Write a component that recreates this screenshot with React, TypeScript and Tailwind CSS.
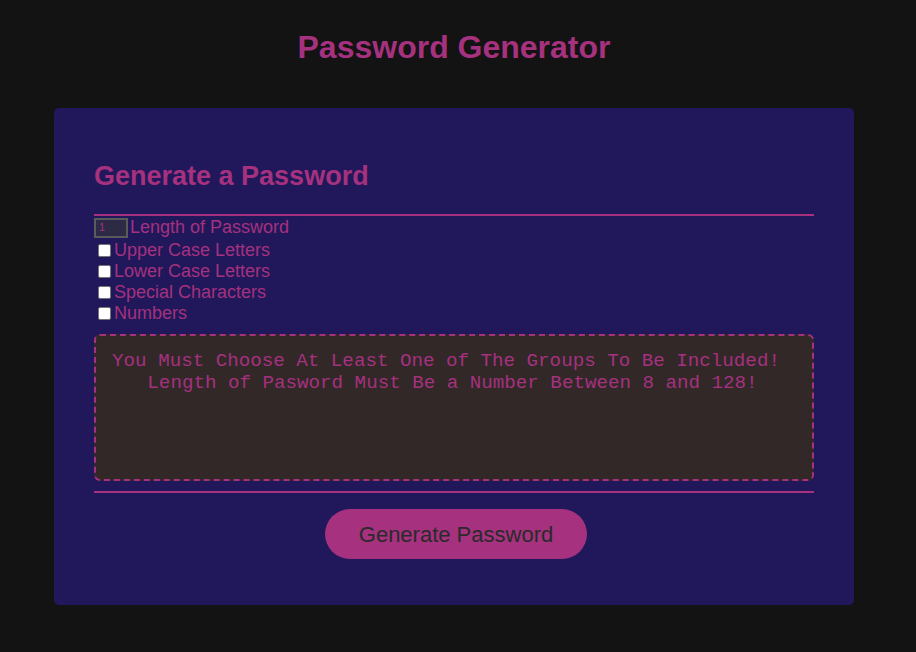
export default function App() {
  return (
    <div className="min-h-[652px] bg-[#131313] font-['Liberation_Sans',Arial,sans-serif] text-[#a5317f]">
      <div className="w-[908px]">
        <header className="pt-[28px] text-center">
          <h1 className="text-[32px] font-bold leading-[38px]">Password Generator</h1>
        </header>
        <div className="mx-auto mt-[42px] w-[800px] rounded-[5px] bg-[#20185a] px-[40px] pb-[46px] pt-[49px]">
          <h2 className="text-[27px] font-bold leading-[38px]">Generate a Password</h2>
          <hr className="mt-[19px] border-t-2 border-[#a5317f]" />
          <div className="flex flex-col text-[18px] leading-[21px]">
            <label className="flex h-[23px] items-center">
              <input
                type="text"
                defaultValue="1"
                className="h-[20px] w-[34px] border-2 border-[#5a5a5a] bg-[#2c2a44] px-[3px] text-[11px] text-[#a5317f] outline-none"
              />
              <span className="ml-[2px]">Length of Password</span>
            </label>
            {["Upper Case Letters", "Lower Case Letters", "Special Characters", "Numbers"].map((l) => (
              <label key={l} className="flex h-[21px] items-center pt-[1px]">
                <span className="ml-[4px] mr-[3px] inline-block h-[13px] w-[13px] rounded-[2px] border border-[#767676] bg-white" />
                <span>{l}</span>
              </label>
            ))}
          </div>
          <div className="mt-[11px] h-[147px] rounded-[6px] border-2 border-dashed border-[#a5317f] bg-[#322828] pt-[14px] text-center font-['Liberation_Mono','Courier_New',monospace] text-[19.2px] leading-[22px]">
            <div className="pr-[16px]">You Must Choose At Least One of The Groups To Be Included!</div>
            <div className="pr-[3px]">Length of Pasword Must Be a Number Between 8 and 128!</div>
          </div>
          <hr className="mt-[10px] border-t-2 border-[#a5317f]" />
          <div className="mt-[16px] flex justify-center pl-[4px]">
            <button className="h-[50px] w-[262px] rounded-full bg-[#a5317f] text-[22px] text-[#2a2a2a]">
              Generate Password
            </button>
          </div>
        </div>
      </div>
    </div>
  );
}
